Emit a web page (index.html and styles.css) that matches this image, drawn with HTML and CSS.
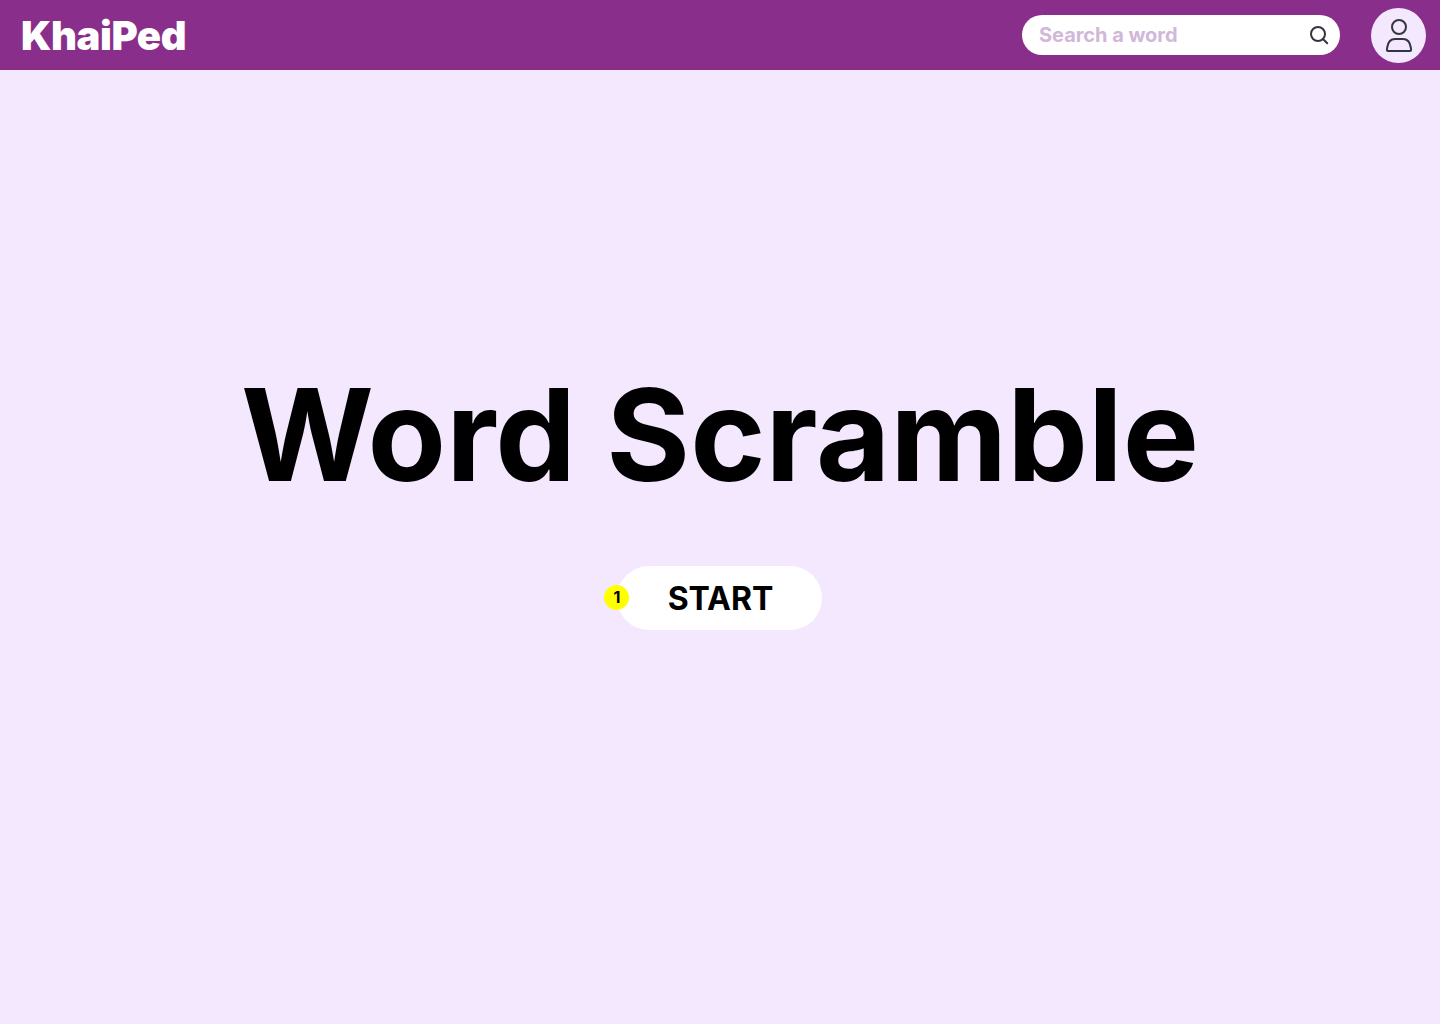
FILE: index.html
```html
<!DOCTYPE html>
<html lang="en">
<head>
<meta charset="utf-8">
<title>KhaiPed – Word Scramble</title>
<link rel="stylesheet" href="styles.css">
</head>
<body>
<header class="topbar">
  <div class="brand">KhaiPed</div>
  <div class="search">
    <span class="search-text">Search a word</span>
    <svg class="search-icon" viewBox="0 0 20 20"><circle cx="9" cy="9" r="7"/><path d="M14 14 18.200 18.200"/></svg>
  </div>
  <div class="avatar">
    <svg class="avatar-icon" viewBox="0 0 29 35"><circle cx="15" cy="9" r="7"/><path d="M3.200 29.500C4 24 6 21 11 21H19C24 21 26 24 26.800 29.500L27.100 32Q27.100 33 26 33H4Q2.900 33 2.900 32Z"/></svg>
  </div>
</header>
<main class="stage">
  <h1 class="title">Word Scramble</h1>
  <div class="start-wrap">
    <button class="start">START</button>
    <span class="badge">1</span>
  </div>
</main>
</body>
</html>
```
FILE: styles.css
```css
* { box-sizing: border-box; }
body { margin: 0; min-height: 1024px; background: #f4e8ff; font-family: Inter, sans-serif; color: #000; }
.topbar { display: flex; align-items: center; height: 70px; padding: 0 14px 0 21px; background: #892e8a; }
.brand { margin-right: auto; padding-top: 2px; font-size: 40px; font-weight: 900; line-height: 48px; letter-spacing: -0.4px; color: #fff; }
.search { display: flex; align-items: center; justify-content: space-between; width: 318px; height: 40px; padding: 0 11px 0 17px; border-radius: 20px; background: #fff; }
.search-text { font-size: 20px; font-weight: 700; line-height: 24px; letter-spacing: -0.04px; color: #d1b7d9; }
.search-icon { width: 20px; height: 20px; fill: none; stroke: #33363f; stroke-width: 2; stroke-linecap: round; }
.avatar { display: flex; align-items: center; justify-content: center; width: 55px; height: 55px; margin-top: 1px; margin-left: 31px; border-radius: 50%; background: #f4e8ff; }
.avatar-icon { width: 29px; height: 35px; margin-right: 1px; fill: none; stroke: #33363f; stroke-width: 2; stroke-linejoin: round; }
.stage { display: flex; flex-direction: column; align-items: center; padding-top: 287px; }
.title { margin: 0; font-size: 128.1px; font-weight: 700; line-height: 155px; white-space: nowrap; }
.start-wrap { position: relative; margin-top: 54px; padding-right: 1px; }
.start { display: block; width: 205px; height: 64px; padding: 0 0 0 2px; border: 0; border-radius: 32px; background: #fff; font: 700 32px/39px Inter, sans-serif; color: #000; }
.badge { position: absolute; left: -13px; top: 19px; width: 25px; height: 25px; padding-left: 1px; border-radius: 50%; background: #ff0; font-size: 16px; font-weight: 700; line-height: 25px; text-align: center; }
```
